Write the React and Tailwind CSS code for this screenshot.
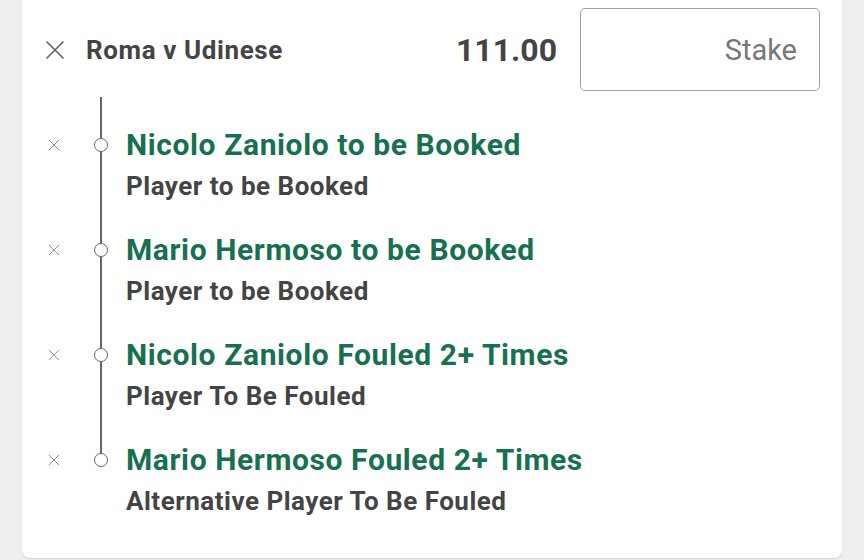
const legs = [
  { title: "Nicolo Zaniolo to be Booked", market: "Player to be Booked" },
  { title: "Mario Hermoso to be Booked", market: "Player to be Booked" },
  { title: "Nicolo Zaniolo Fouled 2+ Times", market: "Player To Be Fouled" },
  { title: "Mario Hermoso Fouled 2+ Times", market: "Alternative Player To Be Fouled" },
];

const Cross = ({ size, stroke, width }) => (
  <svg width={size} height={size} viewBox="0 0 20 20" fill="none">
    <path d="M2 2L18 18M18 2L2 18" stroke={stroke} strokeWidth={width} strokeLinecap="round" />
  </svg>
);

export default function App() {
  return (
    <div className="w-[864px] h-[560px] bg-[#efefef] overflow-hidden font-['Roboto',sans-serif]">
      <div className="ml-[22px] w-[820px] h-[558px] bg-white rounded-b-lg shadow-[0_1px_2px_rgba(0,0,0,0.12)]">
        {/* header */}
        <div className="flex items-center pt-[8px] pl-[23px] pr-[22px]">
          <div className="w-[41px] flex items-center">
            <Cross size={20} stroke="#666" width={1.7} />
          </div>
          <span className="text-[26px] font-bold text-[#444] leading-none tracking-[0.6px]">Roma v Udinese</span>
          <span className="ml-auto text-[32px] font-bold text-[#444] leading-none">111.00</span>
          <div className="ml-[23px] w-[240px] h-[83px] border-[1.5px] border-[#a0a0a0] rounded-[5px] flex items-center justify-end pr-[22px] pt-[2px]">
            <span className="text-[29px] text-[#777]">Stake</span>
          </div>
        </div>

        {/* legs */}
        <div className="mt-[6px]">
          {legs.map((leg, i) => (
            <div key={i} className="flex h-[105px]">
              <div className="w-[46px] pl-[26px] pt-[42px]">
                <Cross size={12} stroke="#888" width={1.6} />
              </div>
              <div className="relative w-[58px]">
                <div
                  className={
                    i === legs.length - 1
                      ? "absolute left-[32px] top-0 h-[48px] w-[2px] bg-[#666]"
                      : "absolute left-[32px] top-0 h-full w-[2px] bg-[#666]"
                  }
                />
                <div className="absolute left-[26px] top-[41px] w-[14px] h-[14px] rounded-full border-[1.5px] border-[#666] bg-white" />
              </div>
              <div className="pt-[29px]">
                <div className="text-[30px] leading-[38px] font-bold text-[#17704f] tracking-[0.6px]">{leg.title}</div>
                <div className="text-[26px] leading-[32px] font-bold text-[#444] mt-[6px] tracking-[0.5px]">{leg.market}</div>
              </div>
            </div>
          ))}
        </div>
      </div>
    </div>
  );
}
